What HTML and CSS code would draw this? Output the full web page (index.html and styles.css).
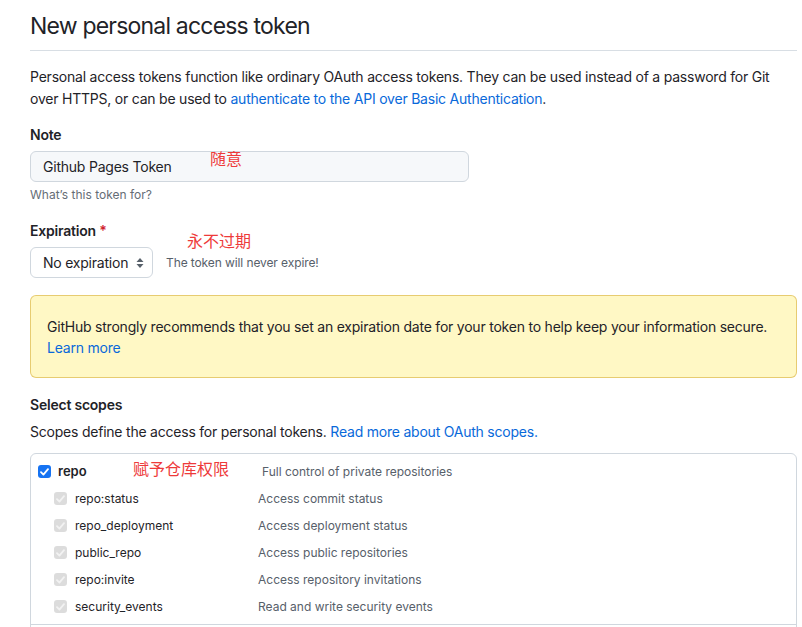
FILE: index.html
```html
<!DOCTYPE html>
<html lang="en">
<head>
<meta charset="utf-8">
<title>New personal access token</title>
<link rel="stylesheet" href="styles.css">
</head>
<body>
<div class="page">
  <h1 class="title">New personal access token</h1>
  <p class="intro">Personal access tokens function like ordinary OAuth access tokens. They can be used instead of a password for Git over HTTPS, or can be used to <a class="link" href="#">authenticate to the API over Basic Authentication</a>.</p>

  <div class="field note-field">
    <label class="label">Note</label>
    <div class="input">Github Pages Token</div>
    <p class="hint">What’s this token for?</p>
    <span class="annot annot-note">随意</span>
  </div>

  <div class="field exp-field">
    <label class="label">Expiration <span class="req">*</span></label>
    <div class="exp-row">
      <div class="select">No expiration
        <svg class="caret" width="8" height="12" viewBox="0 0 8 12"><path d="M4 1 L7.5 5 H0.5 Z M4 11 L7.5 7 H0.5 Z" fill="#57606a"/></svg>
      </div>
      <span class="exp-note">The token will never expire!</span>
    </div>
    <span class="annot annot-exp">永不过期</span>
  </div>

  <div class="flash">GitHub strongly recommends that you set an expiration date for your token to help keep your information secure.<br><a class="link" href="#">Learn more</a></div>

  <h2 class="label scopes-title">Select scopes</h2>
  <p class="scopes-desc">Scopes define the access for personal tokens. <a class="link" href="#">Read more about OAuth scopes.</a></p>

  <div class="scopes">
    <div class="group">
      <div class="row row-main">
        <span class="name"><span class="cb cb-on"><svg width="9" height="8" viewBox="0 0 9 8"><path d="M1 4.2 L3.4 6.6 L8 1.2" fill="none" stroke="#fff" stroke-width="1.8" stroke-linecap="round" stroke-linejoin="round"/></svg></span><b>repo</b></span>
        <span class="desc desc-main">Full control of private repositories</span>
        <span class="annot annot-repo">赋予仓库权限</span>
      </div>
      <div class="row row-sub">
        <span class="name"><span class="cb cb-off"><svg width="9" height="8" viewBox="0 0 9 8"><path d="M1 4.2 L3.4 6.6 L8 1.2" fill="none" stroke="#f2f2f2" stroke-width="1.8" stroke-linecap="round" stroke-linejoin="round"/></svg></span>repo:status</span>
        <span class="desc">Access commit status</span>
      </div>
      <div class="row row-sub">
        <span class="name"><span class="cb cb-off"><svg width="9" height="8" viewBox="0 0 9 8"><path d="M1 4.2 L3.4 6.6 L8 1.2" fill="none" stroke="#f2f2f2" stroke-width="1.8" stroke-linecap="round" stroke-linejoin="round"/></svg></span>repo_deployment</span>
        <span class="desc">Access deployment status</span>
      </div>
      <div class="row row-sub">
        <span class="name"><span class="cb cb-off"><svg width="9" height="8" viewBox="0 0 9 8"><path d="M1 4.2 L3.4 6.6 L8 1.2" fill="none" stroke="#f2f2f2" stroke-width="1.8" stroke-linecap="round" stroke-linejoin="round"/></svg></span>public_repo</span>
        <span class="desc">Access public repositories</span>
      </div>
      <div class="row row-sub">
        <span class="name"><span class="cb cb-off"><svg width="9" height="8" viewBox="0 0 9 8"><path d="M1 4.2 L3.4 6.6 L8 1.2" fill="none" stroke="#f2f2f2" stroke-width="1.8" stroke-linecap="round" stroke-linejoin="round"/></svg></span>repo:invite</span>
        <span class="desc">Access repository invitations</span>
      </div>
      <div class="row row-sub">
        <span class="name"><span class="cb cb-off"><svg width="9" height="8" viewBox="0 0 9 8"><path d="M1 4.2 L3.4 6.6 L8 1.2" fill="none" stroke="#f2f2f2" stroke-width="1.8" stroke-linecap="round" stroke-linejoin="round"/></svg></span>security_events</span>
        <span class="desc">Read and write security events</span>
      </div>
    </div>
    <div class="group"></div>
  </div>
</div>
</body>
</html>
```

FILE: styles.css
```css
html, body {
  margin: 0;
  padding: 0;
  background: #ffffff;
}
body {
  font-family: Inter, "Noto Sans", "Noto Sans CJK SC", sans-serif;
  color: #1f2328;
  font-size: 14px;
  line-height: 21px;
  letter-spacing: -0.22px;
  overflow: hidden;
}
.page {
  padding: 11px 5px 0 30px;
}
.title {
  margin: 0;
  font-size: 23px;
  font-weight: 400;
  letter-spacing: -0.8px;
  line-height: 30px;
  padding-bottom: 9px;
  border-bottom: 1px solid #d8dee4;
}
.intro {
  margin: 15px 0 0;
  line-height: 22px;
}
.link {
  color: #0969da;
  text-decoration: none;
}
.field {
  position: relative;
}
.label {
  display: block;
  margin: 0;
  font-size: 14px;
  font-weight: 600;
  line-height: 21px;
}
.note-field {
  margin-top: 14px;
}
.note-field .label {
  margin-bottom: 6px;
}
.input {
  box-sizing: border-box;
  width: 439px;
  height: 31px;
  padding: 0 12px;
  line-height: 29px;
  background: #f6f8fa;
  border: 1px solid #d0d7de;
  border-radius: 6px;
}
.hint {
  margin: 4px 0 0;
  font-size: 12px;
  line-height: 18px;
  letter-spacing: 0;
  color: #656d76;
}
.exp-field {
  margin-top: 16px;
}
.req {
  color: #cf222e;
}
.exp-row {
  display: flex;
  align-items: center;
  gap: 13px;
  margin-top: 6px;
}
.select {
  box-sizing: border-box;
  display: flex;
  align-items: center;
  justify-content: space-between;
  width: 123px;
  height: 31px;
  padding: 0 8px 0 12px;
  border: 1px solid #d0d7de;
  border-radius: 6px;
  background: #ffffff;
}
.exp-note {
  font-size: 12px;
  letter-spacing: -0.1px;
  color: #57606a;
}
.flash {
  box-sizing: border-box;
  margin-top: 17px;
  width: 767px;
  padding: 20px 16px 19px;
  background: #fff8c5;
  border: 1px solid rgba(212, 167, 44, 0.55);
  border-radius: 6px;
}
.scopes-title {
  margin-top: 16px;
}
.scopes-desc {
  margin: 6px 0 0;
}
.scopes {
  margin-top: 11px;
  width: 767px;
  box-sizing: border-box;
  border: 1px solid #d0d7de;
  border-radius: 6px;
  min-height: 200px;
}
.group {
  padding: 4px 0;
  border-bottom: 1px solid #d0d7de;
}
.group:last-child {
  border-bottom: 0;
}
.row {
  display: flex;
  align-items: center;
  height: 27px;
  position: relative;
}
.name {
  display: flex;
  align-items: center;
  flex: none;
}
.row-main .name {
  width: 224px;
  padding-left: 7px;
  gap: 7px;
}
.row-sub .name {
  width: 204px;
  padding-left: 23px;
  gap: 8px;
  font-size: 12px;
  letter-spacing: 0;
}
.cb {
  box-sizing: border-box;
  width: 13px;
  height: 13px;
  border-radius: 3px;
  display: flex;
  align-items: center;
  justify-content: center;
}
.cb-on {
  background: #1673f2;
}
.cb-off {
  background: #dcdcdc;
}
.row-main b {
  font-weight: 600;
  font-size: 13px;
  letter-spacing: 0;
}
.desc {
  font-size: 12px;
  letter-spacing: 0;
  color: #57606a;
}
.annot {
  position: absolute;
  color: #ee3a3a;
  font-family: "Noto Sans CJK SC", sans-serif;
  font-size: 16px;
  line-height: 20px;
  letter-spacing: 0;
  white-space: nowrap;
}
.annot-note {
  left: 180px;
  top: 24px;
}
.annot-exp {
  left: 157px;
  top: 10px;
}
.annot-repo {
  left: 102px;
  top: 0px;
}
```
